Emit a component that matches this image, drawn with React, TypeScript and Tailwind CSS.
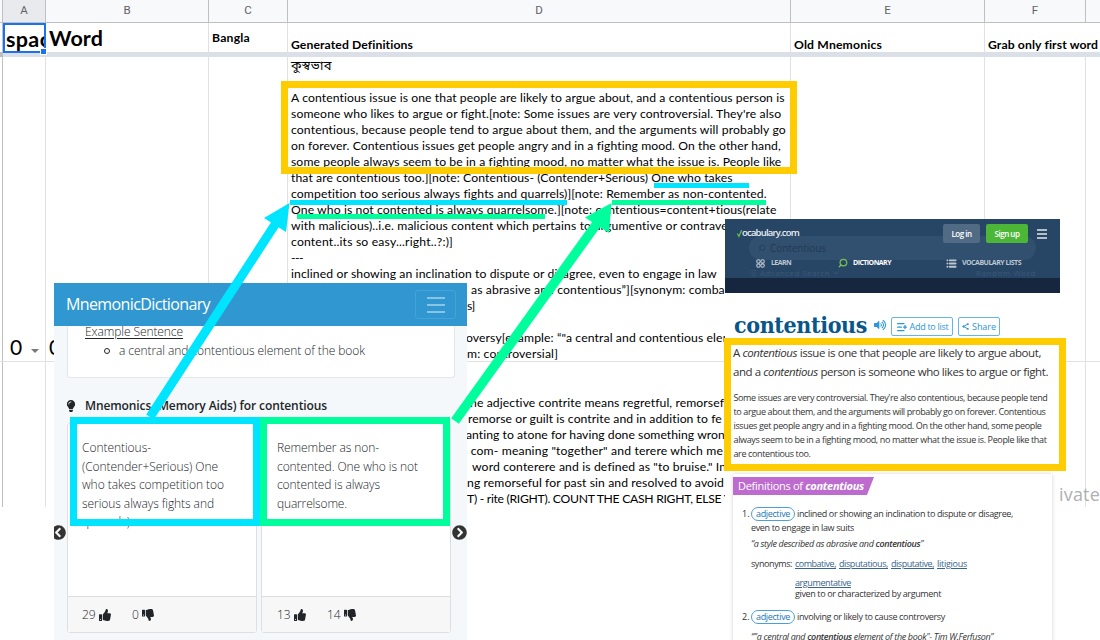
import { useLayoutEffect, useRef, useState, type ReactNode } from "react";
import {
  FaChevronCircleLeft,
  FaChevronCircleRight,
  FaLightbulb,
  FaThumbsDown,
  FaThumbsUp,
  FaVolumeUp,
} from "react-icons/fa";
import { List, ListPlus, Search } from "lucide-react";

/** One line of text whose tracking is adjusted so that it spans `w` pixels. */
function Fit({ w, className = "", children }: { w: number; className?: string; children: ReactNode }) {
  const ref = useRef<HTMLSpanElement>(null);
  const [spacing, setSpacing] = useState(0);
  useLayoutEffect(() => {
    const el = ref.current;
    if (!el) return;
    el.style.letterSpacing = "0px";
    const natural = el.getBoundingClientRect().width;
    const count = (el.textContent ?? "").length;
    const next = count > 1 ? (w - natural) / count : 0;
    el.style.letterSpacing = `${next}px`;
    setSpacing(next);
  }, [w]);
  return (
    <span ref={ref} className={`inline-block shrink-0 whitespace-pre ${className}`} style={{ letterSpacing: `${spacing}px` }}>
      {children}
    </span>
  );
}

type Line = { t: string; w: number; pad?: string };

const upperLines: Line[] = [
  { t: "A contentious issue is one that people are likely to argue about, and a contentious person is", w: 494 },
  { t: "someone who likes to argue or fight.[note: Some issues are very controversial. They're also", w: 490 },
  { t: "contentious, because people tend to argue about them, and the arguments will probably go", w: 495 },
  { t: "on forever. Contentious issues get people angry and in a fighting mood. On the other hand,", w: 490 },
  { t: "some people always seem to be in a fighting mood, no matter what the issue is. People like", w: 490 },
  { t: "that are contentious too.][note: Contentious- (Contender+Serious) One who takes", w: 442 },
  { t: "competition too serious always fights and quarrels)][note: Remember as non-contented.", w: 476 },
  { t: "One who is not contented is always quarrelsome.][note: contentious=content+tious(relate", w: 486 },
  { t: "with malicious)..i.e. malicious content which pertains to argumentive or contrave", w: 437 },
  { t: "content..its so easy...right..?:)]", w: 162 },
  { t: "---", w: 12 },
  { t: "inclined or showing an inclination to dispute or disagree, even to engage in law", w: 426 },
  { t: "as abrasive and contentious”][synonym: comba", w: 254, pad: "pl-[180px]" },
  { t: "s]", w: 8, pad: "pl-[176px]" },
  { t: "", w: 0 },
  { t: "oversy[example: “\"a central and contentious elem", w: 267, pad: "pl-[175px]" },
  { t: "m: controversial]", w: 91, pad: "pl-[176px]" },
];

const lowerLines: Line[] = [
  { t: "he adjective contrite means regretful, remorsef", w: 254, pad: "pl-[179px]" },
  { t: "remorse or guilt is contrite and in addition to fe", w: 254, pad: "pl-[177px]" },
  { t: "anting to atone for having done something wron", w: 259, pad: "pl-[175px]" },
  { t: "s com- meaning \"together\" and terere which me", w: 261, pad: "pl-[171px]" },
  { t: "word conterere and is defined as \"to bruise.\" In", w: 254, pad: "pl-[181px]" },
  { t: "ng remorseful for past sin and resolved to avoid", w: 257, pad: "pl-[176px]" },
  { t: "T) - rite (RIGHT). COUNT THE CASH RIGHT, ELSE Y", w: 264, pad: "pl-[176px]" },
];

function CellLines({ lines }: { lines: Line[] }) {
  return (
    <>
      {lines.map((l, i) => (
        <div key={i} className={`flex h-4 items-center leading-4 ${l.pad ?? ""}`}>
          {l.t && <Fit w={l.w}>{l.t}</Fit>}
        </div>
      ))}
    </>
  );
}

const grid = "grid grid-cols-[3px_43px_163px_79px_503px_194px_101px_14px]";
const line = "border-r border-[#e1e1e1]";

function Sheet() {
  return (
    <div className="flex h-[640px] flex-col bg-white font-['Lato',sans-serif] text-[12.2px] text-black">
      <div className={`${grid} h-[23px] shrink-0 border-b border-[#c0c0c0] bg-[#f8f9fa] font-['Roboto',sans-serif] text-[11.5px] leading-[21px] text-[#5f6368]`}>
        <div className="border-r border-[#c0c0c0]" />
        {["A", "B", "C", "D", "E", "F"].map((c) => (
          <div key={c} className={`border-r border-[#c0c0c0] text-center ${c === "A" ? "bg-[#e8eaed]" : ""}`}>
            {c}
          </div>
        ))}
      </div>
      <div className={`${grid} h-[29px] shrink-0 grid-rows-[29px] font-bold`}>
        <div className="border-r border-[#c0c0c0]" />
        <div className="relative z-10 h-[30px] border-2 border-[#1a73e8]">
          <div className="h-[26px] overflow-hidden pl-px text-[21.5px] leading-[28px]">
            <Fit w={56}>space</Fit>
          </div>
          <div className="absolute -right-[3px] -bottom-[4px] size-[7px] border border-white bg-[#1a73e8]" />
        </div>
        <div className={`${line} pl-[3px] text-[21.5px] leading-[31px]`}>
          <Fit w={54}>Word</Fit>
        </div>
        <div className={`${line} pl-[3px] leading-[29px]`}>
          <Fit w={38}>Bangla</Fit>
        </div>
        <div className={`${line} pl-[3px] leading-[43px]`}>
          <Fit w={122}>Generated Definitions</Fit>
        </div>
        <div className={`${line} pl-[3px] leading-[43px]`}>
          <Fit w={88}>Old Mnemonics</Fit>
        </div>
        <div className="pl-[3px] leading-[43px]">
          <Fit w={110}>Grab only first word</Fit>
        </div>
      </div>
      <div className="flex h-[5px] shrink-0 bg-[#dadfe8]">
        <div className="w-[3px] bg-[#bdbdbd]" />
      </div>
      <div className={`${grid} h-[305px] shrink-0 grid-rows-[304px] border-b border-[#e1e1e1]`}>
        <div className="border-r border-[#c0c0c0]" />
        <div className={`${line} flex items-end gap-[9px] pb-px pl-[7px]`}>
          <Fit w={12} className="text-[21px] leading-[26px]">0</Fit>
          <div className="mb-[7px] h-0 w-0 border-x-4 border-t-4 border-x-transparent border-t-[#777777]" />
        </div>
        <div className={`${line} flex items-end pb-px pl-[3px]`}>
          <span className="text-[21px] leading-[26px]">0</span>
        </div>
        <div className={line} />
        <div className={`${line} overflow-hidden pl-[3px]`}>
          <div className="h-[33px] font-['Noto_Sans_Bengali','Lohit_Bengali','FreeSans',sans-serif] text-[13px] leading-[20px]">
            <Fit w={43}>কুস্বভাব</Fit>
          </div>
          <CellLines lines={upperLines} />
        </div>
        <div className={line} />
        <div className={line} />
      </div>
      <div className={`${grid} h-[145px] shrink-0`}>
        <div className="border-r border-[#c0c0c0]" />
        <div className={line} />
        <div className={line} />
        <div className={line} />
        <div className={`${line} overflow-hidden pt-[33px] pl-[3px]`}>
          <CellLines lines={lowerLines} />
        </div>
        <div className={line} />
        <div className={line} />
      </div>
    </div>
  );
}

function MnemonicCard({ lines, up, down, pad }: { lines: Line[]; up: string; down: string; pad: string }) {
  return (
    <div className="flex h-[210px] w-[190px] flex-col rounded-[3px] border border-[#dfdfdf] bg-white">
      <div className={`flex-1 pt-[15px] ${pad}`}>
        {lines.map((l) => (
          <div key={l.t} className="h-[18.6px] leading-[18px]">
            <Fit w={l.w}>{l.t}</Fit>
          </div>
        ))}
      </div>
      <div className={`flex h-[36px] items-center border-t border-[#dfdfdf] bg-[#f7f7f7] text-[#212529] ${pad}`}>
        <span className="w-[17px]">{up}</span>
        <FaThumbsUp className="size-[12px]" />
        <span className="ml-[21px] min-w-[10px] pr-[3px]">{down}</span>
        <FaThumbsDown className="size-[12px]" />
      </div>
    </div>
  );
}

function MnemonicWindow() {
  return (
    <div className="absolute top-[283px] left-[54px] flex h-[357px] w-[413px] flex-col overflow-hidden bg-[#f5f8fa] font-['Open_Sans',sans-serif] text-[12px] font-light text-[#212529]">
      <div className="flex h-[43px] shrink-0 items-center justify-between bg-[#3097d1] pr-[11px] pl-[12px] font-normal text-white">
        <Fit w={144} className="pb-px text-[16px]">MnemonicDictionary</Fit>
        <div className="flex h-[29px] w-[41px] flex-col items-center justify-center gap-[5px] rounded-[3px] border border-[#45a2d6]">
          <div className="h-[2px] w-[18px] bg-[#8ac4e5]" />
          <div className="h-[2px] w-[18px] bg-[#8ac4e5]" />
          <div className="h-[2px] w-[18px] bg-[#8ac4e5]" />
        </div>
      </div>
      <div className="ml-[13px] h-[52px] w-[388px] shrink-0 rounded-b-[3px] border border-t-0 border-[#e4e7e9] bg-white pl-[17px]">
        <div className="h-[16px] leading-[12px]">
          <Fit w={98} className="underline underline-offset-2">Example Sentence</Fit>
        </div>
        <div className="flex h-[18px] items-center pl-[19px]">
          <div className="mr-[9px] size-[6px] rounded-full border border-[#212529]" />
          <Fit w={246}>a central and contentious element of the book</Fit>
        </div>
      </div>
      <div className="flex h-[54px] shrink-0 items-center pt-px pl-[11px] font-semibold">
        <FaLightbulb className="mr-[8px] size-[12px]" />
        <Fit w={242}>Mnemonics (Memory Aids) for contentious</Fit>
      </div>
      <div className="relative -mt-[9px] flex gap-[4px] pl-[13px]">
        <MnemonicCard
          pad="pl-[14px]"
          lines={[
            { t: "Contentious-", w: 69 },
            { t: "(Contender+Serious) One", w: 136 },
            { t: "who takes competition too", w: 142 },
            { t: "serious always fights and", w: 132 },
            { t: "quarrels)", w: 48 },
          ]}
          up="29"
          down="0"
        />
        <MnemonicCard
          pad="pl-[15px]"
          lines={[
            { t: "Remember as non-", w: 102 },
            { t: "contented. One who is not", w: 141 },
            { t: "contented is always", w: 103 },
            { t: "quarrelsome.", w: 70 },
          ]}
          up="13"
          down="14"
        />
        <FaChevronCircleLeft className="absolute top-[102px] left-[-3px] size-[15px] text-[#333333]" />
        <FaChevronCircleRight className="absolute top-[102px] left-[398px] size-[15px] text-[#333333]" />
      </div>
    </div>
  );
}

function VocabHeader() {
  return (
    <div className="relative flex h-[74px] shrink-0 flex-col overflow-hidden bg-[#274666] text-white">
      <div className="absolute top-[17px] left-[24px] flex h-[24px] w-[287px] items-center gap-[4px] rounded-full bg-[#314f6f] pl-[9px] text-[10px] text-[#213a56]">
        <Search className="size-[8px] -scale-x-100" />
        <Fit w={56}>Contentious</Fit>
      </div>
      <div className="absolute top-[47px] left-[24px] flex w-[287px] justify-between text-[8px] leading-[14px] text-[#3b5976]">
        <div className="flex items-center gap-[3px]">
          <List className="size-[8px]" />
          <Fit w={70}>Advanced Search</Fit>
          <svg viewBox="0 0 6 4" className="h-[4px] w-[6px]" fill="none" stroke="currentColor">
            <path d="M0.5 0.5 L3 3 L5.5 0.5" />
          </svg>
        </div>
        <Fit w={60}>Random Word</Fit>
      </div>
      <div className="relative flex h-[29px] items-center pl-[12px]">
        <svg viewBox="0 0 6 9" className="h-[9px] w-[5px]" fill="none" stroke="#6cc24a" strokeWidth="1.4">
          <path d="M0.5 4.5 L2.3 8 L5.5 0.5" />
        </svg>
        <Fit w={57} className="text-[9.5px] font-semibold text-[#e9eef3]">ocabulary.com</Fit>
        <div className="ml-[144px] flex h-[19px] w-[37px] items-center justify-center rounded-[2px] bg-[#526b85] text-[8px] font-semibold">
          <Fit w={20}>Log in</Fit>
        </div>
        <div className="ml-[6px] flex h-[19px] w-[42px] items-center justify-center rounded-[2px] bg-[#4cb637] text-[8px] font-semibold">
          <Fit w={25}>Sign up</Fit>
        </div>
        <div className="ml-[9px] flex flex-col gap-[2px]">
          <div className="h-[2px] w-[10px] bg-[#b3bfca]" />
          <div className="h-[2px] w-[10px] bg-[#b3bfca]" />
          <div className="h-[2px] w-[10px] bg-[#b3bfca]" />
        </div>
      </div>
      <div className="relative flex h-[30px] items-center pl-[31px] text-[7px] font-bold text-[#bdc7d1]">
        <svg viewBox="0 0 10 10" className="mr-[6px] size-[9px]" fill="none" stroke="currentColor" strokeWidth="1.2">
          <circle cx="2.7" cy="2.7" r="1.9" />
          <circle cx="7.3" cy="2.7" r="1.9" />
          <circle cx="2.7" cy="7.3" r="1.9" />
          <circle cx="7.3" cy="7.3" r="1.9" />
        </svg>
        <Fit w={20}>LEARN</Fit>
        <Search className="mr-[5px] ml-[47px] size-[10px] -scale-x-100 text-[#7cc04f]" strokeWidth={3} />
        <Fit w={38} className="text-white">DICTIONARY</Fit>
        <List className="mr-[5px] ml-[55px] size-[11px]" strokeWidth={4} />
        <Fit w={59}>VOCABULARY LISTS</Fit>
      </div>
      <div className="relative h-[15px] bg-[#16263f]" />
    </div>
  );
}

function Adjective() {
  return (
    <div className="mr-[2px] flex h-[14px] w-[44px] items-center justify-center rounded-full border border-[#4a9fd8] text-[#1a78b8]">
      <Fit w={34}>adjective</Fit>
    </div>
  );
}

function VocabularyWindow() {
  return (
    <div className="absolute top-[219px] left-[725px] flex h-[421px] w-[335px] flex-col overflow-hidden bg-white font-['Open_Sans',sans-serif] text-[9px] text-[#333333]">
      <VocabHeader />
      <div className="flex h-[47px] shrink-0 items-end pl-[9px] text-[#2b95dd]">
        <Fit w={133} className="font-['DejaVu_Serif_Condensed','DejaVu_Serif',serif] text-[23px] leading-[30px] font-bold text-[#08568a]">
          contentious
        </Fit>
        <FaVolumeUp className="mb-[9px] ml-[7px] size-[12px]" />
        <div className="mb-[4px] ml-[5px] flex h-[19px] w-[62px] items-center justify-center gap-[2px] rounded-[2px] border border-[#67b4e8]">
          <ListPlus className="size-[12px]" strokeWidth={2.5} />
          <Fit w={39}>Add to list</Fit>
        </div>
        <div className="mb-[4px] ml-[5px] flex h-[19px] w-[42px] items-center justify-center gap-[3px] rounded-[2px] border border-[#67b4e8]">
          <svg viewBox="0 0 7 7" className="size-[7px]" fill="none" stroke="currentColor" strokeWidth="1">
            <path d="M6 1 L1.5 3.5 L6 6" />
            <circle cx="1.4" cy="3.5" r="0.7" fill="currentColor" />
            <circle cx="5.9" cy="1.1" r="0.5" fill="currentColor" />
            <circle cx="5.9" cy="5.9" r="0.5" fill="currentColor" />
          </svg>
          <Fit w={24}>Share</Fit>
        </div>
      </div>
      <div className="h-[50px] shrink-0 pt-[4px] pl-[8px] text-[11.5px] leading-[18.5px]">
        <div>
          <Fit w={308}>A <i>contentious</i> issue is one that people are likely to argue about,</Fit>
        </div>
        <div>
          <Fit w={315}>and a <i>contentious</i> person is someone who likes to argue or fight.</Fit>
        </div>
      </div>
      <div className="h-[80px] shrink-0 pt-px pl-[8.5px] leading-[14px]">
        <div className="h-[14px]"><Fit w={314}>Some issues are very controversial. They're also contentious, because people tend</Fit></div>
        <div className="h-[14px]"><Fit w={312}>to argue about them, and the arguments will probably go on forever. Contentious</Fit></div>
        <div className="h-[14px]"><Fit w={308}>issues get people angry and in a fighting mood. On the other hand, some people</Fit></div>
        <div className="h-[14px]"><Fit w={313}>always seem to be in a fighting mood, no matter what the issue is. People like that</Fit></div>
        <div className="h-[14px]"><Fit w={77}>are contentious too.</Fit></div>
      </div>
      <div className="mt-[4px] ml-[8px] h-[180px] w-[319px] shrink-0 bg-white pt-[3px] shadow-[0_0_4px_rgba(0,0,0,0.18)]">
        <div className="flex h-[18px] w-[141px] items-center bg-[#bd6bcf] pl-[5px] text-[11px] text-white [clip-path:polygon(0_0,100%_0,95%_100%,0_100%)]">
          <Fit w={126}>Definitions of <b><i>contentious</i></b></Fit>
        </div>
        <div className="mt-[11px] flex h-[16px] items-center pl-[9px]">
          <span className="w-[9px]">1.</span>
          <Adjective />
          <Fit w={216}>inclined or showing an inclination to dispute or disagree,</Fit>
        </div>
        <div className="h-[15px] pl-[18px] leading-[11px]">
          <Fit w={103}>even to engage in law suits</Fit>
        </div>
        <div className="h-[18px] pl-[18px] leading-[14px] italic">
          <Fit w={172}>“a style described as abrasive and <b className="font-semibold">contentious</b>”</Fit>
        </div>
        <div className="flex h-[19px] gap-[3px] pl-[18px] leading-[17px] text-[#39648c]">
          <Fit w={41} className="text-[#333333]">synonyms:</Fit>
          <Fit w={41} className="underline">combative,</Fit>
          <Fit w={49} className="underline">disputatious,</Fit>
          <Fit w={43} className="underline">disputative,</Fit>
          <Fit w={30} className="underline">litigious</Fit>
        </div>
        <div className="h-[13px] pl-[62px] leading-[17px] text-[#39648c]">
          <Fit w={56} className="underline">argumentative</Fit>
        </div>
        <div className="h-[22px] pl-[62px] leading-[13px]">
          <Fit w={146}>given to or characterized by argument</Fit>
        </div>
        <div className="flex h-[16px] items-center pl-[9px]">
          <span className="w-[9px]">2.</span>
          <Adjective />
          <Fit w={148}>involving or likely to cause controversy</Fit>
        </div>
        <div className="pl-[18px] leading-[23px] italic">
          <Fit w={242}>“"a central and <b className="font-semibold">contentious</b> element of the book"- Tim W.Ferfuson”</Fit>
        </div>
      </div>
    </div>
  );
}

/** Highlight frames, underlines and arrows drawn over the windows. */
function Annotations() {
  return (
    <>
      <div className="absolute top-[81px] left-[281px] h-[93px] w-[516px] border-[7px] border-[#ffcc00]" />
      <div className="absolute top-[338px] left-[724px] h-[133px] w-[342px] border-[7px] border-[#ffcc00]" />
      <div className="absolute top-[417px] left-[70px] h-[109px] w-[190px] border-[7px] border-[#00e5ff]" />
      <div className="absolute top-[417px] left-[260px] h-[109px] w-[190px] border-[7px] border-[#00ff9c]" />
      <div className="absolute top-[183px] left-[654px] h-[5px] w-[95px] bg-[#00e5ff]" />
      <div className="absolute top-[200px] left-[290px] h-[5px] w-[277px] bg-[#00e5ff]" />
      <div className="absolute top-[200px] left-[612px] h-[5px] w-[154px] bg-[#00ff9c]" />
      <div className="absolute top-[214px] left-[297px] h-[5px] w-[248px] bg-[#00ff9c]" />
      <svg className="absolute top-0 left-0 h-[640px] w-[1100px]" viewBox="0 0 1100 640">
        <path d="M150 417 L276 223" stroke="#00e5ff" strokeWidth="9" />
        <path d="M289.5 203 L264 218 L286 232 Z" fill="#00e5ff" />
        <path d="M455 421 L598 222" stroke="#00ff9c" strokeWidth="9.5" />
        <path d="M611.5 203 L585 217.5 L609 233 Z" fill="#00ff9c" />
      </svg>
    </>
  );
}

export default function App() {
  return (
    <div className="relative h-[640px] w-[1100px] overflow-hidden bg-white">
      <Sheet />
      <div className="absolute top-[483px] left-[1059px] w-[41px] overflow-hidden font-['Open_Sans',sans-serif] text-[18px] leading-[22px] text-[#b0b0b0]">
        <Fit w={41}>ivate</Fit>
      </div>
      <MnemonicWindow />
      <VocabularyWindow />
      <Annotations />
    </div>
  );
}
